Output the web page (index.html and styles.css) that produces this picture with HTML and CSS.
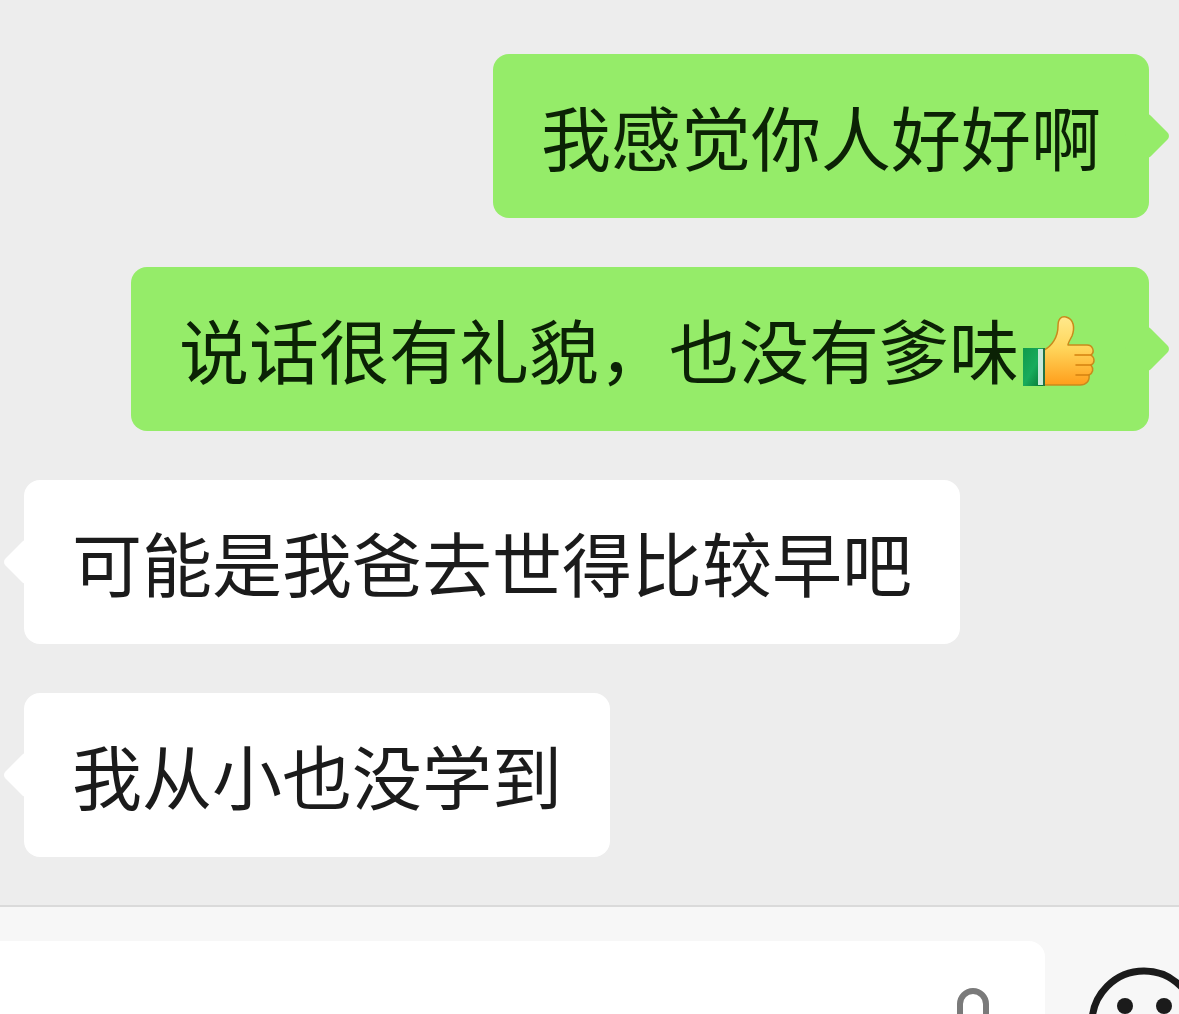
FILE: index.html
```
<!DOCTYPE html>
<html lang="zh-CN">
<head>
<meta charset="utf-8">
<meta name="viewport" content="width=device-width, initial-scale=1">
<title>聊天</title>
<link rel="stylesheet" href="styles.css">
</head>
<body>
<main class="chat">
  <p class="bubble sent">我感觉你人好好啊</p>
  <p class="bubble sent">说话很有礼貌，也没有爹味<svg class="emoji" viewBox="0 0 82 80" role="img" aria-label="赞">
    <defs>
      <linearGradient id="skin" x1="0" y1="0" x2="0" y2="1">
        <stop offset="0" stop-color="#ffe98c"/>
        <stop offset="0.45" stop-color="#ffd65c"/>
        <stop offset="1" stop-color="#ff9e1b"/>
      </linearGradient>
      <linearGradient id="sleeve" x1="0" y1="0" x2="1" y2="1">
        <stop offset="0" stop-color="#109a4c"/>
        <stop offset="0.5" stop-color="#18ab5c"/>
        <stop offset="1" stop-color="#04702f"/>
      </linearGradient>
    </defs>
    <path d="M25 41C33 37 39 28 39 17C39 10 42 7 47 8C55 10 56 19 53 27C51 31 49 34 49 36H68C74 36 76 43 72 46C76 49 76 54 72 56C75 60 74 64 70 66C71 72 67 76 61 76H25Z" fill="url(#skin)" stroke="#c98a1c" stroke-width="1.5" stroke-linejoin="round"/>
    <path d="M56 46H72M57 56H72M57 66H70" fill="none" stroke="#d5810f" stroke-width="1.5" stroke-linecap="round"/>
    <path d="M4 39H26V77H4Z" fill="url(#sleeve)"/>
    <path d="M19 40H24V76H19Z" fill="#c9e9da"/>
    <path d="M24 39H26V77H24Z" fill="#247344"/>
  </svg></p>
  <p class="bubble received">可能是我爸去世得比较早吧</p>
  <p class="bubble received">我从小也没学到</p>
</main>
<footer class="composer">
  <div class="composer-row">
    <div class="field">
      <input class="field-input" type="text" aria-label="输入消息">
      <button class="icon-button mic" type="button" aria-label="语音输入">
        <svg width="48" height="70" viewBox="0 0 48 70" fill="none" stroke="#7a7a7a" stroke-width="6">
          <rect x="11" y="3" width="26" height="42" rx="13"/>
          <path d="M4 34C4 62 44 62 44 34M24 55V70"/>
        </svg>
      </button>
    </div>
    <button class="icon-button" type="button" aria-label="表情">
      <svg width="112" height="112" viewBox="0 0 112 112">
        <circle cx="56" cy="56" r="52" fill="none" stroke="#1b1b1b" stroke-width="7"/>
        <circle cx="37" cy="39" r="8" fill="#1b1b1b"/>
        <circle cx="76" cy="39" r="8" fill="#1b1b1b"/>
        <path d="M28 64C36 90 76 90 84 64Z" fill="none" stroke="#1b1b1b" stroke-width="7" stroke-linejoin="round"/>
      </svg>
    </button>
  </div>
</footer>
</body>
</html>
```
FILE: styles.css
```
* {
  box-sizing: border-box;
}

body {
  margin: 0;
  height: 100vh;
  overflow: hidden;
  background: #ededed;
  color: #1b1b1b;
  font-family: "Noto Sans CJK SC", "Noto Sans", sans-serif;
}

.chat {
  display: flex;
  flex-direction: column;
  gap: 49px;
  padding: 54px 30px 48px 24px;
}

.bubble {
  position: relative;
  margin: 0;
  padding: 32px 48px;
  border-radius: 16px;
  font-size: 70px;
  line-height: 100px;
}

.sent {
  align-self: flex-end;
  background: #95ec69;
  color: #0b2205;
}

.received {
  align-self: flex-start;
  background: #ffffff;
}

/* Rounded tip that points to the speaker's side */
.bubble::after {
  content: "";
  position: absolute;
  top: 65px;
  width: 34px;
  height: 34px;
  border-radius: 5px;
  background: inherit;
  transform: rotate(45deg);
}

.sent::after {
  right: -15px;
}

.received::after {
  left: -15px;
}

.emoji {
  width: 82px;
  height: 80px;
  vertical-align: -10px;
}

.composer {
  border-top: 2px solid #dadada;
  background: #f7f7f7;
}

.composer-row {
  display: flex;
  align-items: center;
  gap: 43px;
  margin-right: -21px;
  padding: 34px 0;
}

.field {
  display: flex;
  flex: 1;
  align-items: center;
  height: 164px;
  padding-right: 48px;
  border-radius: 0 16px 16px 0;
  background: #ffffff;
}

.field-input {
  flex: 1;
  min-width: 0;
  height: 100%;
  padding: 0 48px;
  border: 0;
  outline: 0;
  background: transparent;
  font: inherit;
  font-size: 70px;
}

.icon-button {
  flex: none;
  padding: 0;
  border: 0;
  background: transparent;
}

.icon-button svg {
  display: block;
}
```
